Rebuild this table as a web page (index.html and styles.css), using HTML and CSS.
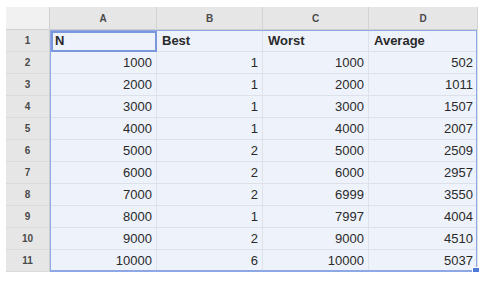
FILE: index.html
```html
<!DOCTYPE html>
<html>
<head>
<meta charset="utf-8">
<link rel="stylesheet" href="styles.css">
</head>
<body>
<div class="sheet">
  <div class="grid">
    <div class="corner"></div>
    <div class="colh">A</div><div class="colh">B</div><div class="colh">C</div><div class="colh">D</div>

    <div class="rowh">1</div><div class="c t">N</div><div class="c t">Best</div><div class="c t">Worst</div><div class="c t">Average</div>
    <div class="rowh">2</div><div class="c">1000</div><div class="c">1</div><div class="c">1000</div><div class="c">502</div>
    <div class="rowh">3</div><div class="c">2000</div><div class="c">1</div><div class="c">2000</div><div class="c">1011</div>
    <div class="rowh">4</div><div class="c">3000</div><div class="c">1</div><div class="c">3000</div><div class="c">1507</div>
    <div class="rowh">5</div><div class="c">4000</div><div class="c">1</div><div class="c">4000</div><div class="c">2007</div>
    <div class="rowh">6</div><div class="c">5000</div><div class="c">2</div><div class="c">5000</div><div class="c">2509</div>
    <div class="rowh">7</div><div class="c">6000</div><div class="c">2</div><div class="c">6000</div><div class="c">2957</div>
    <div class="rowh">8</div><div class="c">7000</div><div class="c">2</div><div class="c">6999</div><div class="c">3550</div>
    <div class="rowh">9</div><div class="c">8000</div><div class="c">1</div><div class="c">7997</div><div class="c">4004</div>
    <div class="rowh">10</div><div class="c">9000</div><div class="c">2</div><div class="c">9000</div><div class="c">4510</div>
    <div class="rowh">11</div><div class="c">10000</div><div class="c">6</div><div class="c">10000</div><div class="c">5037</div>
  </div>
  <div class="selection"><div class="handle"></div></div>
  <div class="active"></div>
</div>
</body>
</html>
```
FILE: styles.css
```css
html, body {
  margin: 0;
  padding: 0;
  background: #ffffff;
}
body {
  padding: 7px 0 0 6px;
  font-family: "Liberation Sans", Arial, sans-serif;
}
.sheet {
  position: relative;
  width: 472px;
}
.grid {
  display: grid;
  grid-template-columns: 44px 107px 106px 106px 109px;
  grid-template-rows: 23px repeat(11, 22px);
}
.grid > div {
  box-sizing: border-box;
  display: flex;
  align-items: center;
}
.corner {
  background: #f1f1f1;
  border-right: 1px solid #cfcfcf;
  border-bottom: 1px solid #cfcfcf;
}
.colh {
  background: #e6e6e6;
  border-right: 1px solid #d3d3d3;
  border-bottom: 1px solid #cfcfcf;
  justify-content: center;
  font-size: 10px;
  font-weight: bold;
  color: #4a4a4a;
}
.rowh {
  background: #e6e6e6;
  border-right: 1px solid #cfcfcf;
  border-bottom: 1px solid #dadada;
  justify-content: center;
  font-size: 10px;
  font-weight: bold;
  color: #4a4a4a;
}
.c {
  background: #eef2fb;
  border-right: 1px solid #dde2ea;
  border-bottom: 1px solid #dde2ea;
  justify-content: flex-end;
  padding: 0 4px;
  font-size: 13px;
  color: #2a2a2a;
}
.c.t {
  justify-content: flex-start;
  font-weight: bold;
  padding: 0 5px;
}
.selection {
  position: absolute;
  left: 44px;
  top: 23px;
  width: 427px;
  height: 242px;
  box-sizing: border-box;
  border: 1px solid #8ea8e6;
  border-bottom: 2px solid #8ea8e6;
}
.handle {
  position: absolute;
  right: -4px;
  bottom: -5px;
  width: 6px;
  height: 6px;
  background: #4d79d6;
  border: 1px solid #fff;
}
.active {
  position: absolute;
  left: 45px;
  top: 24px;
  width: 106px;
  height: 21px;
  box-sizing: border-box;
  border: 2px solid #7b98dc;
}
```
